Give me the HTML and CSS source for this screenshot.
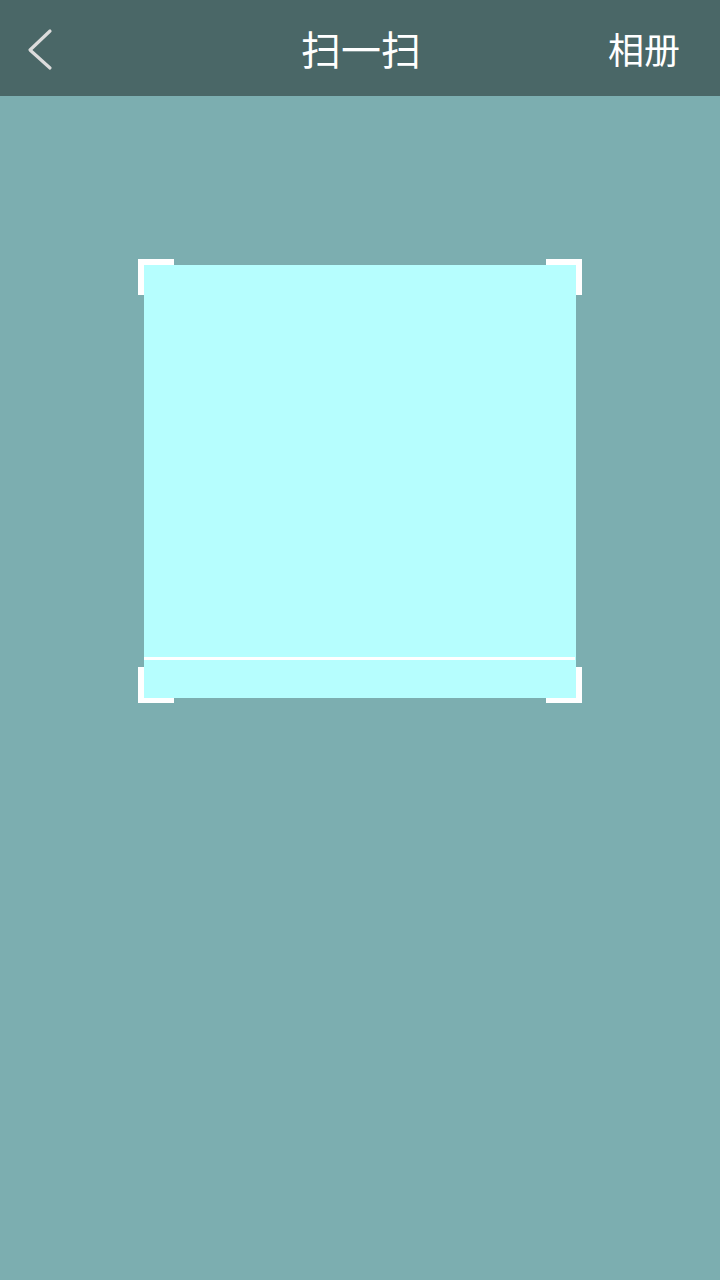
FILE: index.html
```html
<!DOCTYPE html>
<html lang="zh">
<head>
<meta charset="utf-8">
<link rel="stylesheet" href="styles.css">
</head>
<body>
<div class="page">
  <header class="bar">
    <div class="back">
      <svg width="30" height="46" viewBox="0 0 30 46"><polyline points="24,5 4,24 24,42" fill="none" stroke="#dcdcdc" stroke-width="3.2" stroke-linecap="round" stroke-linejoin="round"/></svg>
    </div>
    <div class="title">扫一扫</div>
    <div class="album">相册</div>
  </header>
  <main class="content">
    <div class="frame">
      <span class="corner tl"></span>
      <span class="corner tr"></span>
      <span class="corner bl"></span>
      <span class="corner br"></span>
      <div class="box">
        <div class="line"></div>
      </div>
    </div>
  </main>
</div>
</body>
</html>
```
FILE: styles.css
```css
html, body { margin: 0; padding: 0; }
body {
  width: 720px;
  height: 1280px;
  background: #7caeb0;
  font-family: "Noto Sans CJK SC", "Noto Sans", sans-serif;
  overflow: hidden;
}
.page { width: 720px; height: 1280px; display: flex; flex-direction: column; }
.bar {
  height: 96px;
  background: #4a6767;
  display: flex;
  align-items: center;
  position: relative;
  color: #fff;
}
.back {
  position: absolute;
  left: 26px;
  top: 26px;
  width: 30px;
  height: 46px;
}
.back svg { display: block; }
.title {
  flex: 1;
  text-align: center;
  font-size: 40px;
  line-height: 96px;
  padding-left: 2px;
}
.album {
  position: absolute;
  right: 40px;
  top: 0;
  font-size: 36px;
  line-height: 96px;
}
.content {
  flex: 1;
  padding-top: 163px;
  display: flex;
  justify-content: center;
}
.frame {
  position: relative;
  width: 444px;
  height: 444px;
}
.box {
  position: absolute;
  left: 6px;
  top: 6px;
  width: 432px;
  height: 433px;
  background: #b6fefe;
}
.line {
  position: absolute;
  left: 0;
  top: 392px;
  width: 431px;
  height: 3px;
  background: #fff;
}
.corner {
  position: absolute;
  width: 36px;
  height: 36px;
  border: 0 solid #fff;
  box-sizing: border-box;
}
.tl { left: 0; top: 0; border-left-width: 6px; border-top-width: 6px; }
.tr { right: 0; top: 0; border-right-width: 6px; border-top-width: 6px; }
.bl { left: 0; bottom: 0; border-left-width: 6px; border-bottom-width: 6px; }
.br { right: 0; bottom: 0; border-right-width: 6px; border-bottom-width: 6px; }
```
